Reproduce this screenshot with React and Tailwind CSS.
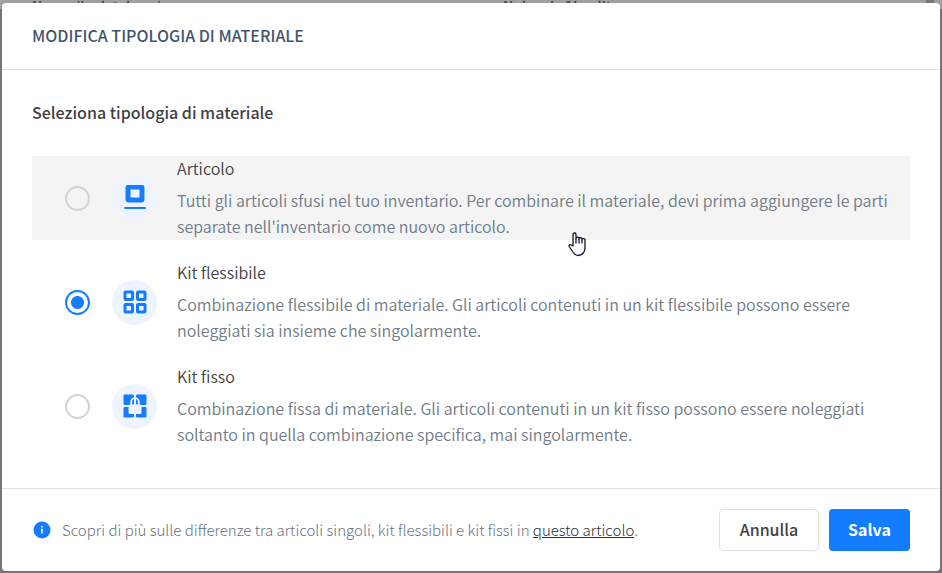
const OPTIONS = [
  {
    id: "articolo",
    title: "Articolo",
    text: "Tutti gli articoli sfusi nel tuo inventario. Per combinare il materiale, devi prima aggiungere le parti separate nell'inventario come nuovo articolo.",
    Icon: ItemIcon,
    row: "bg-[#f4f4f4]",
  },
  {
    id: "flessibile",
    title: "Kit flessibile",
    text: "Combinazione flessibile di materiale. Gli articoli contenuti in un kit flessibile possono essere noleggiati sia insieme che singolarmente.",
    Icon: FlexibleKitIcon,
    row: "",
  },
  {
    id: "fisso",
    title: "Kit fisso",
    text: "Combinazione fissa di materiale. Gli articoli contenuti in un kit fisso possono essere noleggiati soltanto in quella combinazione specifica, mai singolarmente.",
    Icon: FixedKitIcon,
    row: "",
  },
];

function ItemIcon() {
  return (
    <svg width="24" height="26" viewBox="0 0 24 26" fill="none" stroke="#147dff" aria-hidden="true">
      <rect x="5" y="2" width="14" height="13" rx="1" strokeWidth="5" />
      <path d="M2 23h20" strokeWidth="2" strokeLinecap="round" />
    </svg>
  );
}

function FlexibleKitIcon() {
  return (
    <svg width="24" height="24" viewBox="0 0 24 24" fill="none" stroke="#147dff" strokeWidth="3" aria-hidden="true">
      <rect x="2" y="2" width="7.5" height="7.5" rx="0.5" />
      <rect x="14.5" y="2" width="7.5" height="7.5" rx="0.5" />
      <rect x="2" y="14.5" width="7.5" height="7.5" rx="0.5" />
      <rect x="14.5" y="14.5" width="7.5" height="7.5" rx="0.5" />
    </svg>
  );
}

function FixedKitIcon() {
  return (
    <svg width="24" height="24" viewBox="0 0 24 24" aria-hidden="true">
      <g fill="#147dff">
        <rect x=".5" y=".5" width="10.500" height="10.500" rx="1.200" />
        <rect x="13" y=".5" width="10.500" height="10.500" rx="1.200" />
        <rect x=".5" y="13" width="10.500" height="10.500" rx="1.200" />
        <rect x="13" y="13" width="10.500" height="10.500" rx="1.200" />
      </g>
      <path d="M8.200 11V8a3.800 3.800 0 0 1 7.600 0v3" fill="none" stroke="#eef4ff" strokeWidth="1.800" />
      <path d="M12 5v6" stroke="#eef4ff" strokeWidth="1.500" />
      <rect x="5.500" y="10.500" width="13" height="9.500" rx="1.500" fill="#eef4ff" />
    </svg>
  );
}

function InfoIcon() {
  return (
    <svg width="18" height="18" viewBox="0 0 18 18" className="shrink-0" aria-hidden="true">
      <circle cx="9" cy="9" r="8.500" fill="#147dff" />
      <path d="M9 5v1.500M8 8.500h1v4" stroke="#fff" strokeWidth="1.500" fill="none" />
    </svg>
  );
}

function HandCursor() {
  return (
    <svg width="18" height="25" viewBox="0 0 18 25" className="absolute top-[232px] left-[568px]" aria-hidden="true">
      <path
        d="M5 14V2.500a1.500 1.500 0 0 1 3 0V6.500a1.500 1.500 0 0 1 3 .5a1.500 1.500 0 0 1 3 .5a1.500 1.500 0 0 1 3 1.500v7c0 4-3 7.500-6.500 7.500-3 0-4.500-1.500-6-4L1.200 14.500c-.7-1.300 1-2.500 2-1.500z"
        fill="#fff"
        stroke="#11112b"
        strokeWidth="1.300"
        strokeLinejoin="round"
      />
      <path d="M8 6.500v5M11 7v4.500M14 8v3.500" stroke="#11112b" strokeWidth="1.300" />
    </svg>
  );
}

export default function App() {
  return (
    <div className="relative min-h-screen overflow-hidden bg-[#757577] px-[2px] pt-[3px] pb-[2px] font-['Noto_Sans_CJK_SC','Noto_Sans',sans-serif] text-base text-[#3f4143]">
      <div
        aria-hidden="true"
        className="absolute inset-x-0 top-0 flex h-[9px] overflow-hidden bg-[#a0a0a0] pr-2 pl-8 text-sm leading-3 font-medium text-[#3a4048]"
      >
        <span className="flex-1">Nome (in database)</span>
        <span className="flex-1 pl-12">Noleggio/Vendita</span>
        <span className="w-2 bg-[#757577]" />
      </div>
      <div role="dialog" aria-labelledby="dialog-title" className="relative rounded-[4px] bg-white">
        <header className="border-b border-[#dfe0e2] px-[30px] pt-[19px] pb-[21px]">
          <h1 id="dialog-title" className="text-base leading-[26px] font-medium text-[#44546a] uppercase">
            Modifica tipologia di materiale
          </h1>
        </header>
        <form>
          <fieldset className="px-[30px] pt-[29px] pb-10">
            <legend className="contents">
              <span className="block text-base leading-[26px] font-medium">Seleziona tipologia di materiale</span>
            </legend>
            <div className="mt-[31px] flex flex-col gap-5">
              {OPTIONS.map(({ id, title, text, Icon, row }) => (
                <label key={id} className={"flex items-center pr-5 pl-[33px] " + row}>
                  <input
                    type="radio"
                    name="tipologia"
                    defaultChecked={id === "flessibile"}
                    className="size-[25px] shrink-0 appearance-none rounded-full border-2 border-[#d0d3d8] bg-transparent checked:border-[#147dff] checked:bg-[radial-gradient(circle,#147dff_6px,transparent_7px)]"
                  />
                  <span className="ml-[22px] flex size-[45px] shrink-0 items-center justify-center rounded-full bg-[#eef4ff]">
                    <Icon />
                  </span>
                  <span className="ml-5 min-w-0 flex-1 pb-px font-[350]">
                    <span className="block leading-6">{title}</span>
                    <span className="mt-[7px] block leading-[26px] text-[#6f7b87]">{text}</span>
                  </span>
                </label>
              ))}
            </div>
          </fieldset>
          <footer className="flex items-center gap-[10px] border-t border-[#dfe0e2] px-[30px] py-5">
            <div className="flex flex-1 items-center gap-[11px] pl-px text-[15px] font-light text-[#66727e]">
              <InfoIcon />
              <p>
                Scopri di più sulle differenze tra articoli singoli, kit flessibili e kit fissi in{" "}
                <a href="#articolo" className="text-[#303234] underline">questo articolo</a>.
              </p>
            </div>
            <button type="button" className="h-[42px] w-[100px] rounded-[4px] border border-[#dfe0e2] bg-white pb-0.5 font-medium">
              Annulla
            </button>
            <button type="submit" className="h-[42px] w-[81px] rounded-[4px] bg-[#147dff] pb-0.5 font-bold text-white">
              Salva
            </button>
          </footer>
        </form>
      </div>
      <HandCursor />
    </div>
  );
}
